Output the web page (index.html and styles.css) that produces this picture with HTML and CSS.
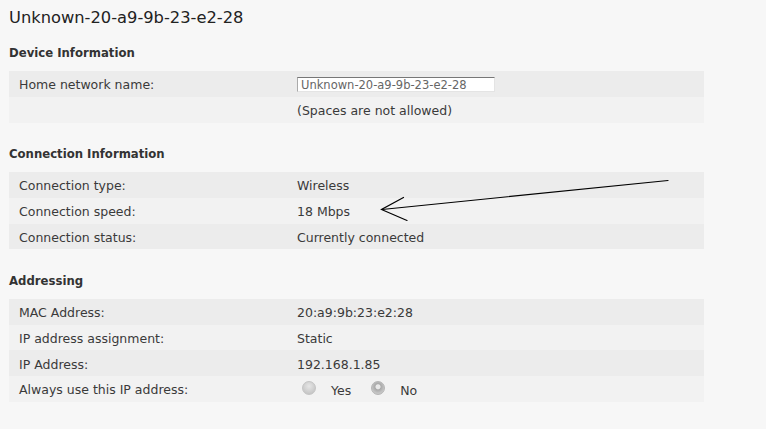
FILE: index.html
```html
<!DOCTYPE html>
<html>
<head>
<meta charset="utf-8">
<link rel="stylesheet" href="styles.css">
</head>
<body>
<div class="page">
  <h1 class="title">Unknown-20-a9-9b-23-e2-28</h1>

  <h2 class="section-head first">Device Information</h2>
  <div class="table">
    <div class="row odd">
      <div class="label">Home network name:</div>
      <div class="value"><input class="name-input" type="text" value="Unknown-20-a9-9b-23-e2-28"></div>
    </div>
    <div class="row even">
      <div class="label"></div>
      <div class="value">(Spaces are not allowed)</div>
    </div>
  </div>

  <h2 class="section-head">Connection Information</h2>
  <div class="table">
    <div class="row odd"><div class="label">Connection type:</div><div class="value">Wireless</div></div>
    <div class="row even"><div class="label">Connection speed:</div><div class="value">18 Mbps</div></div>
    <div class="row odd"><div class="label">Connection status:</div><div class="value">Currently connected</div></div>
  </div>

  <h2 class="section-head">Addressing</h2>
  <div class="table">
    <div class="row odd"><div class="label">MAC Address:</div><div class="value">20:a9:9b:23:e2:28</div></div>
    <div class="row even"><div class="label">IP address assignment:</div><div class="value">Static</div></div>
    <div class="row odd"><div class="label">IP Address:</div><div class="value">192.168.1.85</div></div>
    <div class="row even">
      <div class="label">Always use this IP address:</div>
      <div class="value radios">
        <span class="radio"></span><span class="radio-text">Yes</span>
        <span class="radio checked"></span><span class="radio-text">No</span>
      </div>
    </div>
  </div>
</div>

<svg class="arrow" width="766" height="429" viewBox="0 0 766 429">
  <g fill="none" stroke="#000" stroke-width="1.2" stroke-linecap="round">
    <path d="M668 180.5 L382 209.5"/>
    <path d="M403.5 197.5 L381.5 209.5 L407 220.5"/>
  </g>
</svg>
</body>
</html>
```
FILE: styles.css
```css
html, body {
  margin: 0;
  padding: 0;
  background: #f7f7f7;
}

body {
  font-family: "DejaVu Sans", Verdana, sans-serif;
  color: #333;
  position: relative;
  width: 766px;
  height: 429px;
  overflow: hidden;
}

.page {
  padding: 8px 0 0 9px;
  width: 695px;
}

.title {
  margin: 0;
  font-size: 16.3px;
  font-weight: normal;
  line-height: 20px;
  color: #222;
}

.section-head {
  margin: 21.5px 0 8px 0;
  font-size: 11.7px;
  font-weight: bold;
  line-height: 20px;
  color: #333;
}

.section-head.first {
  margin-top: 15px;
}

.table {
  display: flex;
  flex-direction: column;
}

.row {
  display: grid;
  grid-template-columns: 288px 1fr;
  height: 25.75px;
  align-items: center;
  font-size: 12.5px;
  color: #3a3a3a;
}

.row.odd {
  background: #ececec;
}

.row.even {
  background: #f2f2f2;
}

.label {
  padding-left: 10px;
  position: relative;
  top: 1px;
}

.value {
  position: relative;
  top: 1px;
}

.name-input {
  box-sizing: border-box;
  width: 198px;
  height: 15px;
  margin: 0;
  padding: 0 3px;
  font-family: "DejaVu Sans", Verdana, sans-serif;
  font-size: 11.5px;
  line-height: 13px;
  color: #666;
  background: #fff;
  border: 1px solid #e4e4e4;
  border-top-color: #777;
  border-left-color: #aaa;
  outline: none;
  display: block;
}

.radios {
  display: flex;
  align-items: center;
}

.radio {
  box-sizing: border-box;
  width: 14px;
  height: 14px;
  border-radius: 50%;
  margin-left: 5px;
  background: radial-gradient(circle at 50% 35%, #e6e6e6 0%, #cfcfcf 55%, #bdbdbd 100%);
  border: 1px solid #c4c4c4;
  position: relative;
  top: -2px;
}

.radio.checked {
  margin-left: 20px;
  background: radial-gradient(circle at 50% 40%, #e9e9e9 0%, #e9e9e9 22%, #a9a9a9 32%, #c7c7c7 70%, #bdbdbd 100%);
  border-color: #b5b5b5;
}

.radio-text {
  margin-left: 15px;
  position: relative;
  top: 1px;
}

.arrow {
  position: absolute;
  left: 0;
  top: 0;
  pointer-events: none;
}
```
